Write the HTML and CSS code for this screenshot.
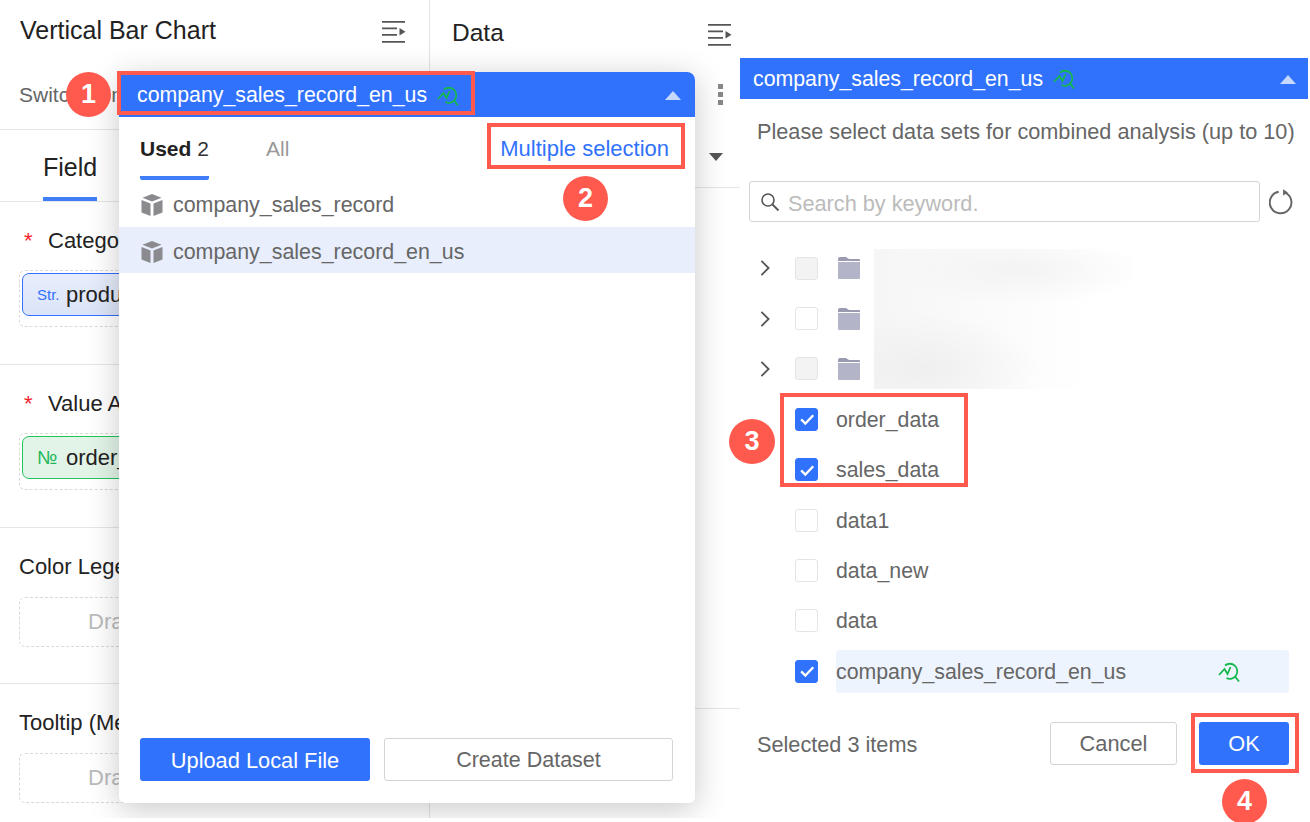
FILE: index.html
```html
<!DOCTYPE html>
<html lang="en">
<head>
<meta charset="utf-8">
<title>Dataset selection</title>
<link rel="stylesheet" href="styles.css">
</head>
<body>
<svg class="defs" width="0" height="0" aria-hidden="true">
  <defs>
    <symbol id="menu" viewBox="0 0 24 24">
      <path d="M0 1h23v1.800H0zM0 7.500h15v1.800H0zM0 14h15v1.800H0zM0 21h23v1.800H0z" fill="#555"/>
      <path d="M17.500 8l6 3.800-6 3.800z" fill="#555"/>
    </symbol>
    <symbol id="insight" viewBox="0 0 22 22">
      <g fill="none" stroke="#16b84e" stroke-width="1.800">
        <path d="M7 4.500A7.500 7.500 0 1 1 8.500 17"/>
        <path d="M17 15.500l4 5"/>
        <path d="M1 14l5.500-6 3 5 3-7"/>
      </g>
    </symbol>
    <symbol id="cube" viewBox="0 0 24 24">
      <path d="M12 1l9.500 3.800L12 8.500 2.500 4.800z" fill="#8a8a8f"/>
      <path d="M1.500 7l9 3.500V23l-9-3.500zM22.500 7l-9 3.500V23l9-3.500z" fill="#8a8a8f"/>
    </symbol>
    <symbol id="folder" viewBox="0 0 24 24">
      <path d="M1 3a2 2 0 0 1 2-2h6l3 2h10a1 1 0 0 1 1 1v1H1z" fill="#9a9ab0"/>
      <path d="M1 6h22v16a1 1 0 0 1-1 1H2a1 1 0 0 1-1-1z" fill="#b4b4c8"/>
    </symbol>
    <symbol id="chev" viewBox="0 0 12 20">
      <path d="M2 2l8 8-8 8" fill="none" stroke="#555" stroke-width="2"/>
    </symbol>
    <symbol id="check" viewBox="0 0 24 24">
      <path d="M5 12.500l5 5 9.500-10" fill="none" stroke="#fff" stroke-width="2.800"/>
    </symbol>
  </defs>
</svg>

<main class="stage">
  <div class="workspace">
    <section class="field-panel">
      <header class="panel-head">
        <h1 class="panel-title">Vertical Bar Chart</h1>
        <svg class="menu-icon"><use href="#menu"/></svg>
      </header>
      <div class="switch-row">Switch from</div>
      <nav class="field-tabs"><span class="field-tab">Field</span></nav>
      <div class="well-group well-req">
        <div class="well-label"><span class="req">*</span>Category Axis</div>
        <div class="well"><div class="chip chip-blue"><span class="chip-type">Str.</span>product_type</div></div>
      </div>
      <div class="well-group well-req">
        <div class="well-label"><span class="req">*</span>Value Axis</div>
        <div class="well"><div class="chip chip-green"><span class="chip-type">№</span>order_amount</div></div>
      </div>
      <div class="well-group well-opt">
        <div class="well-label">Color Legend</div>
        <div class="well well-empty">Drag</div>
      </div>
      <div class="well-group well-opt well-last">
        <div class="well-label">Tooltip (Measures)</div>
        <div class="well well-empty">Drag</div>
      </div>
    </section>

    <section class="data-panel">
      <header class="data-head">
        <h2 class="data-title">Data</h2>
        <svg class="menu-icon"><use href="#menu"/></svg>
      </header>
      <div class="data-select"><span class="dots"><i></i><i></i><i></i></span></div>
      <div class="data-row"><span class="caret-down"></span></div>
      <div class="data-fill"></div>
    </section>

    <div class="popup">
      <div class="popup-head">
        <span class="ds-name">company_sales_record_en_us</span>
        <svg class="insight"><use href="#insight"/></svg>
        <span class="caret-up"></span>
      </div>
      <div class="popup-tabs">
        <span class="ptab ptab-on"><b>Used</b> 2</span>
        <span class="ptab">All</span>
        <span class="multi">Multiple selection</span>
      </div>
      <ul class="ds-list">
        <li class="ds-item"><svg class="cube"><use href="#cube"/></svg>company_sales_record</li>
        <li class="ds-item ds-item-on"><svg class="cube"><use href="#cube"/></svg>company_sales_record_en_us</li>
      </ul>
      <div class="popup-foot">
        <button class="btn btn-primary btn-upload">Upload Local File</button>
        <button class="btn btn-create">Create Dataset</button>
      </div>
    </div>
  </div>

  <section class="select-panel">
    <div class="select-head">
      <span class="ds-name">company_sales_record_en_us</span>
      <svg class="insight"><use href="#insight"/></svg>
      <span class="caret-up"></span>
    </div>
    <p class="select-hint">Please select data sets for combined analysis (up to 10)</p>
    <div class="search-row">
      <div class="search-box">
        <svg class="search-icon" viewBox="0 0 20 20"><circle cx="8" cy="8" r="6" fill="none" stroke="#555" stroke-width="1.600"/><path d="M12.500 12.500l6 6" stroke="#555" stroke-width="1.800"/></svg>
        <span class="placeholder">Search by keyword.</span>
      </div>
      <svg class="refresh" viewBox="0 0 24 24"><path d="M14.500 3.200A10 10 0 1 1 9 2.600" fill="none" stroke="#666" stroke-width="1.800"/><path d="M13 .2l4.500 3-4.500 2.800z" fill="#666"/></svg>
    </div>
    <div class="tree">
      <div class="tree-row"><svg class="chev"><use href="#chev"/></svg><span class="box box-off"></span><svg class="folder"><use href="#folder"/></svg></div>
      <div class="tree-row"><svg class="chev"><use href="#chev"/></svg><span class="box"></span><svg class="folder"><use href="#folder"/></svg></div>
      <div class="tree-row"><svg class="chev"><use href="#chev"/></svg><span class="box box-off"></span><svg class="folder"><use href="#folder"/></svg></div>
      <div class="tree-row"><span class="box box-on"><svg class="check"><use href="#check"/></svg></span><span class="tree-label">order_data</span></div>
      <div class="tree-row"><span class="box box-on"><svg class="check"><use href="#check"/></svg></span><span class="tree-label">sales_data</span></div>
      <div class="tree-row"><span class="box"></span><span class="tree-label">data1</span></div>
      <div class="tree-row"><span class="box"></span><span class="tree-label">data_new</span></div>
      <div class="tree-row"><span class="box"></span><span class="tree-label">data</span></div>
      <div class="tree-row"><span class="box box-on"><svg class="check"><use href="#check"/></svg></span><span class="tree-label tree-label-on">company_sales_record_en_us<svg class="insight"><use href="#insight"/></svg></span></div>
      <div class="blur"></div>
    </div>
    <footer class="select-foot">
      <span class="selected">Selected 3 items</span>
      <button class="btn btn-cancel">Cancel</button>
      <button class="btn btn-primary btn-ok">OK</button>
    </footer>
  </section>

  <div class="mark mark-1"></div>
  <div class="mark mark-2"></div>
  <div class="mark mark-3"></div>
  <div class="mark mark-4"></div>
  <span class="num num-1">1</span>
  <span class="num num-2">2</span>
  <span class="num num-3">3</span>
  <span class="num num-4">4</span>
</main>
</body>
</html>
```

FILE: styles.css
```css
* { box-sizing: border-box; }
html, body { margin: 0; padding: 0; background: #fff; }
body { font-family: "Liberation Sans", Arial, sans-serif; color: #222; overflow: hidden; }
.defs { position: absolute; }
.stage { position: relative; display: flex; width: 1310px; height: 822px; overflow: hidden; }
.workspace { position: relative; display: flex; flex: none; width: 740px; height: 818px; overflow: hidden; }

/* left field panel */
.field-panel { flex: none; width: 430px; border-right: 1px solid #e4e4e4; display: flex; flex-direction: column; }
.field-panel > * { flex: none; }
.panel-head { display: flex; align-items: center; justify-content: space-between; height: 61px; padding: 0 23px 0 20px; }
.panel-title { margin: 0; font-size: 25px; font-weight: 400; color: #222; }
.menu-icon { width: 24px; height: 24px; flex: none; margin-top: 3px; }
.switch-row { height: 69px; padding: 21px 0 0 19px; font-size: 21px; line-height: 26px; color: #666; border-bottom: 1px solid #e6e6e6; }
.field-tabs { height: 72px; padding-left: 43px; border-bottom: 1px solid #e6e6e6; }
.field-tab { display: inline-block; height: 71px; padding-top: 22px; font-size: 25px; line-height: 30px; border-bottom: 4px solid #3f7dfb; }
.well-group { padding: 0 0 0 19px; border-bottom: 1px solid #e6e6e6; }
.well-req { height: 163px; padding-top: 26px; }
.well-opt { height: 156px; padding-top: 26px; }
.well-last { border-bottom: 0; }
.well-label { font-size: 22px; line-height: 26px; color: #222; white-space: nowrap; }
.req { display: inline-block; width: 29px; padding-left: 5px; color: #f5222d; }
.well { margin-top: 15px; width: 380px; border: 1px dashed #d9d9d9; border-radius: 6px; }
.well-req .well { height: 57px; margin-top: 16px; padding: 2px 0 0 2px; }
.well-opt .well { margin-top: 17px; }
.well-empty { height: 50px; padding-left: 68px; font-size: 22px; line-height: 48px; color: #bbb; }
.chip { height: 43px; width: 360px; border-radius: 7px; display: flex; align-items: center; font-size: 22px; padding-left: 14px; }
.chip-type { width: 29px; font-size: 15px; }
.chip-blue { border: 1px solid #3370ff; background: linear-gradient(#e7edfb, #dbe4f8); }
.chip-blue .chip-type { color: #3370ff; }
.chip-green { border: 1px solid #22c55e; background: #e2f4e7; }
.chip-green .chip-type { color: #22b85a; font-size: 19px; }

/* data panel */
.data-panel { flex: none; width: 310px; display: flex; flex-direction: column; }
.data-head { display: flex; align-items: center; justify-content: space-between; height: 72px; padding: 0 8px 6px 22px; }
.data-title { margin: 0; font-size: 24.500px; font-weight: 400; color: #222; }
.data-select { height: 45px; display: flex; align-items: center; justify-content: flex-end; padding-right: 17px; }
.dots { display: flex; flex-direction: column; gap: 3px; }
.dots i { display: block; width: 5px; height: 5px; background: #888; }
.data-row { height: 71px; display: flex; align-items: center; justify-content: flex-end; padding: 10px 17px 0 0; border-bottom: 1px solid #e6e6e6; }
.caret-down { width: 0; height: 0; border-style: solid; border-width: 8px 7.500px 0; border-color: #555 transparent transparent; }
.data-fill { height: 521px; border-bottom: 1px solid #e6e6e6; }

/* dataset popup */
.popup { position: absolute; left: 119px; top: 72px; width: 576px; height: 731px; display: flex; flex-direction: column; background: #fff; border-radius: 6px; box-shadow: 0 6px 32px rgba(0,0,0,.22); }
.popup-head { flex: none; display: flex; align-items: center; height: 45px; padding: 2px 14px 0 18px; background: #3172fd; border-radius: 0 8px 0 0; }
.ds-name { font-size: 21.300px; color: #fff; }
.insight { width: 22px; height: 22px; margin-left: 10px; flex: none; }
.caret-up { margin-left: auto; width: 0; height: 0; border-style: solid; border-width: 0 8px 9px; border-color: transparent transparent #c6d8fc; }
.popup-tabs { flex: none; display: flex; height: 64px; padding-left: 21px; position: relative; }
.ptab { display: block; height: 63px; padding-top: 19px; font-size: 21px; line-height: 26px; color: #999; margin-right: 57px; }
.ptab b { font-weight: 700; color: #222; }
.ptab-on { width: 69px; color: #333; border-bottom: 4px solid #3f7dfb; border-radius: 0 0 2px 2px; }
.multi { margin: 19px 0 0 auto; padding-right: 26px; font-size: 22px; line-height: 26px; color: #3172fd; }
.ds-list { flex: none; margin: 0; padding: 0; list-style: none; }
.ds-item { display: flex; align-items: center; height: 46px; padding: 2px 0 0 21px; font-size: 21.400px; color: #666; }
.ds-item-on { padding-top: 4px; background: #e8eefc; }
.cube { width: 24px; height: 24px; margin-right: 9px; flex: none; }
.popup-foot { margin-top: auto; display: flex; gap: 14px; padding: 0 22px 22px 21px; }
.btn { font-family: inherit; font-size: 21.800px; border-radius: 3px; height: 43px; padding: 2px 0 0; cursor: default; }
.btn-primary { background: #3172fd; color: #fff; border: 0; }
.btn-upload { width: 230px; }
.btn-create { width: 289px; background: #fff; border: 1px solid #d4d4d4; color: #666; font-size: 21.500px; }

/* right panel */
.select-panel { flex: none; width: 570px; padding-top: 58px; display: flex; flex-direction: column; background: #fff; position: relative; }
.select-head { flex: none; display: flex; align-items: center; width: 568px; height: 41px; padding: 1px 12px 0 13px; background: #3172fd; }
.select-hint { margin: 0; padding: 20px 0 0 17px; font-size: 21.700px; line-height: 26px; color: #666; white-space: nowrap; }
.search-row { display: flex; align-items: center; margin: 36px 0 0 9px; }
.search-box { display: flex; align-items: center; width: 511px; height: 41px; padding: 2px 0 0 10px; border: 1px solid #d4d4d4; border-radius: 3px; }
.search-icon { width: 20px; height: 20px; margin: -2px 8px 0 0; }
.placeholder { font-size: 21.700px; color: #bbb; padding-top: 2px; }
.refresh { width: 26px; height: 26px; margin-left: 9px; }
.tree { position: relative; display: grid; grid-auto-rows: 50.400px; margin-top: 21px; padding-left: 19px; }
.tree-row { display: flex; align-items: center; padding-left: 36px; position: relative; }
.chev { position: absolute; left: 0; width: 12px; height: 18px; }
.box { flex: none; width: 23px; height: 23px; border: 1px solid #e4e4e4; border-radius: 3px; background: #fff; }
.box-off { background: #f3f3f3; }
.box-on { background: #3172fd; border-color: #3172fd; display: flex; align-items: center; justify-content: center; }
.check { width: 20px; height: 20px; }
.folder { width: 24px; height: 24px; margin-left: 19px; }
.tree-label { margin-left: 18px; padding-top: 2px; font-size: 21.300px; color: #666; }
.tree-label-on { display: flex; align-items: center; width: 453px; height: 43px; border-radius: 3px; background: #eef4fd; }
.tree-label-on .insight { margin-left: 92px; }
.blur { position: absolute; left: 134px; top: 6px; width: 260px; height: 140px; background: radial-gradient(ellipse 50% 25% at 55% 15%, #f3f3f3, transparent), radial-gradient(ellipse 45% 40% at 18% 85%, #efefef, transparent), linear-gradient(90deg, #f6f6f6, rgba(255,255,255,0) 85%); }
.select-foot { display: flex; align-items: center; margin-top: 25px; padding: 0 21px 0 17px; }
.selected { margin-right: auto; padding-top: 4px; font-size: 21.700px; color: #666; }
.btn-cancel { width: 127px; height: 43px; margin-right: 22px; background: #fff; border: 1px solid #d4d4d4; color: #666; }
.btn-ok { width: 90px; height: 43px; }

/* annotations */
.mark { position: absolute; border: 4px solid #ff5a4d; }
.mark-1 { left: 117px; top: 71px; width: 358px; height: 44px; }
.mark-2 { left: 487px; top: 123px; width: 198px; height: 46px; }
.mark-3 { left: 780px; top: 393px; width: 188px; height: 94px; }
.mark-4 { left: 1191px; top: 713px; width: 108px; height: 60px; }
.num { position: absolute; width: 45px; height: 45px; border-radius: 50%; background: #ff5a4d; color: #fff; font-size: 27px; font-weight: 700; line-height: 45px; text-align: center; }
.num-1 { left: 66px; top: 72px; }
.num-2 { left: 563px; top: 176px; }
.num-3 { left: 729px; top: 419px; width: 46px; }
.num-4 { left: 1222px; top: 779px; }
```
